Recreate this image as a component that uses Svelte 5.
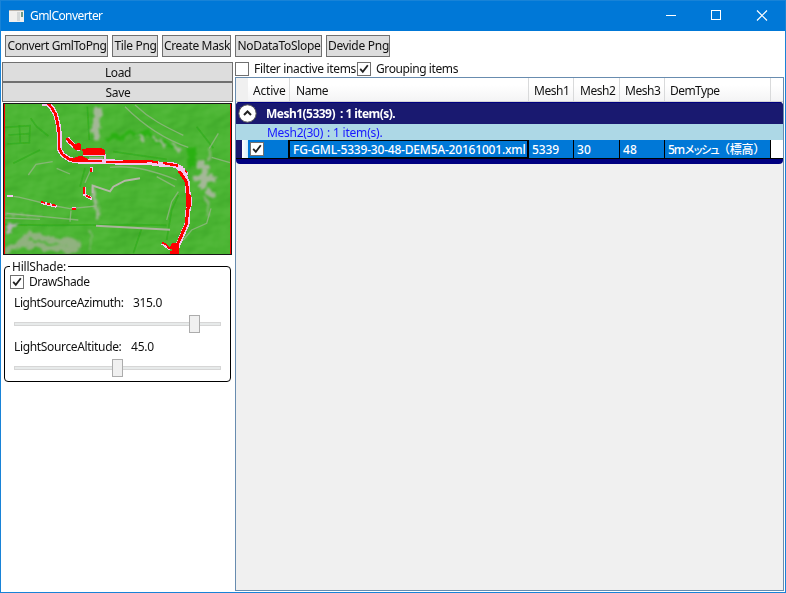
<script>
  // Spread or tighten a label so it takes exactly the given width.
  function fit(node, width) {
    const natural = node.getBoundingClientRect().width;
    const count = [...node.textContent].length;
    node.style.letterSpacing = `${(width - natural) / count}px`;
  }

  const tools = [
    { label: 'Convert GmlToPng', box: 103, text: 99 },
    { label: 'Tile Png', box: 46, text: 42 },
    { label: 'Create Mask', box: 69, text: 66 },
    { label: 'NoDataToSlope', box: 87, text: 83 },
    { label: 'Devide Png', box: 64, text: 61 }
  ];
  const columns = [
    { label: 'Active', box: 42, text: 32.5, pad: 5 },
    { label: 'Name', box: 239, text: 32, pad: 6 },
    { label: 'Mesh1', box: 45, text: 35.5, pad: 5 },
    { label: 'Mesh2', box: 46, text: 35.5, pad: 6 },
    { label: 'Mesh3', box: 45, text: 35.5, pad: 5 },
    { label: 'DemType', box: 106, text: 49.5, pad: 5 }
  ];
  const cells = [
    { label: '5339', box: 45, text: 27 },
    { label: '30', box: 46, text: 14 },
    { label: '48', box: 45, text: 14 }
  ];
  const sliders = [
    { label: 'LightSourceAzimuth:', text: 109.5, value: '315.0', valueText: 29, left: 175 },
    { label: 'LightSourceAltitude:', text: 107.5, value: '45.0', valueText: 23, left: 98 }
  ];
  const river = 'M143 10L156 24L166 42L173 70L177 100L177 145L187 163L208 176L230 181L310 183L375 185L440 185L475 190L520 193L535 199L549 217L560 242L563 275L569 302L562 335L560 370L547 400L533 432L523 461';
  const faint = [
    'M85 225L108 193L158 185', 'M170 205L210 222', 'M255 248L271 212',
    'M330 202C390 195 450 207 530 240', 'M375 20C435 80 500 120 565 142',
    'M405 15C450 58 495 80 550 106', 'M40 289C80 294 115 306 150 315L210 326L290 318',
    'M20 340L130 350L235 360', 'M15 354L120 358', 'M210 365L213 332',
    'M635 172L690 188', 'M628 145L655 100', 'M550 420L575 390L620 370L633 325',
    'M500 360L515 305L535 275', 'M470 230L525 260'
  ];
  const creases = [
    'M15 82L90 77L88 128L22 132', 'M25 105L88 101', 'M58 75L61 128', 'M92 55L110 80L145 108',
    'M15 374L150 376L400 374L500 376', 'M340 155L500 178', 'M535 285L515 330L500 420',
    'M590 80L640 145', 'M262 20L268 120', 'M425 385L400 460', 'M255 205L240 260', 'M120 150L40 190'
  ];
</script>

{#snippet check()}
  <svg class="tick" viewBox="0 0 12 12"><path d="M2.2 5.8L4.8 8.8L9.8 2.2" fill="none" stroke="#212121" stroke-width="1.8" /></svg>
{/snippet}

<div class="window">
  <header>
    <svg class="logo" width="15" height="12" viewBox="0 0 15 12">
      <defs><linearGradient id="app" x2="0" y2="1"><stop stop-color="#3d6680" /><stop offset="1" stop-color="#4f9a68" /></linearGradient></defs>
      <rect width="15" height="12" fill="#f0f0ee" /><rect width="15" height="1" fill="#b9b4ac" />
      <rect x="1" y="2" width="6" height="9" fill="url(#app)" />
      <rect x="8" y="2" width="3" height="9" fill="#d4d8d8" /><rect x="12" y="2" width="2" height="5" fill="#6f9a86" />
    </svg>
    <span class="title" use:fit={72.5}>GmlConverter</span>
    <svg class="controls" width="110" height="30" viewBox="0 0 110 30" fill="none" stroke="#fff">
      <path d="M0 14.5H10" /><rect x="45.5" y="9.5" width="9" height="9" /><path d="M91 9.5L101 19.5M101 9.5L91 19.5" stroke-width="1.2" />
    </svg>
  </header>

  <nav>
    {#each tools as t}
      <button style:width="{t.box}px"><span use:fit={t.text}>{t.label}</span></button>
    {/each}
  </nav>

  <main>
    <aside>
      <button class="wide"><span use:fit={26}>Load</span></button>
      <button class="wide"><span use:fit={25}>Save</span></button>

      <svg class="map" width="229" height="152" viewBox="9 9 687 456" preserveAspectRatio="none">
        <defs>
          <filter id="soft" filterUnits="userSpaceOnUse" x="0" y="0" width="700" height="470"><feGaussianBlur stdDeviation="2.2" /></filter>
          <filter id="smudge" filterUnits="userSpaceOnUse" x="0" y="0" width="700" height="470" color-interpolation-filters="sRGB">
            <feTurbulence type="fractalNoise" baseFrequency="0.04" numOctaves="3" seed="4" result="n" />
            <feDisplacementMap in="SourceGraphic" in2="n" scale="26" xChannelSelector="R" yChannelSelector="G" result="d" /><feGaussianBlur in="d" stdDeviation="2.6" />
          </filter>
          <filter id="relief" x="0" y="0" width="100%" height="100%" color-interpolation-filters="sRGB">
            <feTurbulence type="fractalNoise" baseFrequency="0.01 0.015" numOctaves="3" seed="9" />
            <feDiffuseLighting surfaceScale="14" lighting-color="#fff"><feDistantLight azimuth="225" elevation="30" /></feDiffuseLighting>
          </filter>
        </defs>
        <rect x="9" y="9" width="687" height="456" fill="#4bb533" />
        <rect x="9" y="9" width="687" height="456" filter="url(#relief)" class="shade" />
        <g filter="url(#smudge)" fill="none" stroke="#20b008" stroke-opacity=".75">
          <path d="M318 122L345 105L370 115L390 95L415 108L440 95L470 125L500 130L520 145" stroke-width="14" />
          <path d="M575 140L575 200" stroke-width="20" />
        </g>
        <g filter="url(#soft)" fill="none" stroke="#26a810" stroke-opacity=".5" stroke-width="5">
          {#each creases as d}<path {d} />{/each}
        </g>
        <g filter="url(#smudge)" fill="none" stroke="#a9b79d" stroke-opacity=".95">
          <path d="M295 22L291 65L285 115" stroke-width="20" />
          <path d="M415 105L430 125M455 108L475 125M480 120L500 142M515 128L540 155" stroke-width="9" />
          <path d="M578 232L650 238M604 180L612 220L607 265M620 275L640 281M590 195L630 200" stroke-width="17" />
          <path d="M20 382L50 374M18 398L34 390" stroke-width="14" stroke="#bcb4bc" />
          <path d="M15 450L65 432L105 435L160 445L235 448M65 425L90 405L190 425L240 432" stroke-width="20" stroke="#93b183" />
          <path d="M278 260L283 295L295 330L292 360" stroke-width="9" />
          <path d="M274 390L268 450M15 342L125 348" stroke-width="6" stroke-opacity=".6" />
          <path d="M620 290L622 350M625 150L627 180" stroke-width="9" stroke-opacity=".7" />
        </g>
        <g filter="url(#soft)" fill="none" stroke="#98b58a" stroke-width="4" stroke-opacity=".75">
          {#each faint as d}<path {d} />{/each}
          <path d="M278 280L278 257L330 274L340 260L375 242L420 235" stroke="#b4b7a7" stroke-width="6" stroke-opacity="1" />
          <path d="M288 377L510 389" stroke="#aab49c" stroke-width="6" stroke-opacity="1" />
        </g>
        <g shape-rendering="crispEdges">
          <g fill="none" stroke="#f5c4f0" stroke-linejoin="bevel">
            <path d={river} stroke-width="15" transform="translate(1 2)" />
            <path d="M201 115L217 134L241 148" stroke-width="15" />
            <path d="M248 166H316V182" stroke-width="6" />
            <path d="M486 429L510 448M275 202V217M253 260V284L276 297M125 308L170 319M216 326H228M551 205V214L563 223" stroke-width="9" />
            <path d="M22 288H38M126 14H145" stroke-width="6" />
          </g>
          <path d="M266 174H308" stroke="#8fb37f" stroke-width="7" />
          <g fill="none" stroke="#fe0000" stroke-linejoin="bevel">
            <path d="M143 10L156 24L166 42L173 70L177 100L177 145L187 163L208 178L230 181L265 182" stroke-width="8" />
            <path d="M265 183H307M318 186H372L440 185" stroke-width="6" /><path d="M370 183H450L475 188M488 189L535 197" stroke-width="7" />
            <path d="M537 213L550 231L560 248L563 280L569 302L562 335L560 370L547 400L533 432" stroke-width="9" />
            <path d="M566 285V320" stroke-width="14" /><path d="M200 115L212 128L225 139" stroke-width="9" />
            <path d="M273 203V216M252 262V283M258 287L273 293M123 306L136 309M141 311L150 313M156 314L169 317M216 327H227M486 428L498 434L510 447M555 211L561 218" stroke-width="5" />
          </g>
          <path d="M226 133L234 129L244 132V151H228L219 143ZM246 147L263 145H304L316 150V165H250ZM215 176L230 171L238 168L248 169L262 175L267 185H216ZM511 438L516 430H536V462H510V453H515V446H511Z" fill="#fe0000" />
          <path d="M475 190H485M537 203H550" stroke="#f5c4f0" stroke-width="8" />
          <path d="M13.5 9V465M691.5 9V465" stroke="#fe0000" stroke-width="3" />
          <rect x="10.5" y="10.5" width="684" height="453" fill="none" stroke="#171717" stroke-width="3" />
        </g>
      </svg>

      <section class="group">
        <span class="legend"><span use:fit={54}>HillShade:</span></span>
        <label class="draw"><i class="box">{@render check()}</i><span use:fit={60.5}>DrawShade</span></label>
        {#each sliders as s}
          <div class="slider">
            <div class="caption"><span use:fit={s.text}>{s.label}</span><span use:fit={s.valueText}>{s.value}</span></div>
            <div class="track"><div class="thumb" style:left="{s.left}px"></div></div>
          </div>
        {/each}
      </section>
    </aside>

    <article>
      <div class="filters">
        <i class="box"></i><span class="filter first" use:fit={102}>Filter inactive items</span>
        <i class="box">{@render check()}</i><span class="filter" use:fit={82}>Grouping items</span>
      </div>
      <div class="grid">
        <div class="head">
          <div class="corner"></div>
          {#each columns as c}
            <div class="col" style:width="{c.box}px" style:padding-left="{c.pad}px"><span use:fit={c.text}>{c.label}</span></div>
          {/each}
        </div>
        <div class="outer">
          <div class="mesh1">
            <svg width="19" height="19" viewBox="0 0 19 19"><circle cx="9.5" cy="9.5" r="8.7" fill="#fff" stroke="#555" /><path d="M6 11L9.5 7.5L13 11" fill="none" stroke="#222" stroke-width="2" /></svg>
            <span class="name" use:fit={69}>Mesh1(5339)</span><span use:fit={55}>: 1 item(s).</span>
          </div>
          <div class="mesh2"><span class="name" use:fit={56}>Mesh2(30)</span><span use:fit={55.5}>: 1 item(s).</span></div>
          <div class="row">
            <div class="rowhead"></div>
            <div class="cell active"><i class="box">{@render check()}</i></div>
            <div class="cell file"><span use:fit={232.5}>FG-GML-5339-30-48-DEM5A-20161001.xml</span></div>
            {#each cells as c}
              <div class="cell" style:width="{c.box}px"><span use:fit={c.text}>{c.label}</span></div>
            {/each}
            <div class="cell dem"><span use:fit={16}>5m</span><span class="kana" use:fit={34}>メッシュ</span><span use:fit={47}>（標高）</span></div>
            <div class="rest"></div>
          </div>
        </div>
      </div>
    </article>
  </main>
</div>

<style>
  :global(body) { background: #fff; overflow: hidden; }
  * { box-sizing: border-box; }
  .window {
    width: 786px; height: 593px; display: flex; flex-direction: column;
    border: 1px solid #1883d7; background: #fff; color: #111;
    font: 12px/16px "Noto Sans", "Open Sans", "Noto Sans CJK JP", sans-serif;
  }
  span { white-space: pre; flex: none; }
  header { height: 30px; flex: none; background: #0078d7; color: #fff; display: flex; align-items: center; padding-left: 8px; }
  .title { margin-left: 6px; }
  .logo { flex: none; }
  .controls { margin-left: auto; margin-right: 9px; }
  nav { display: flex; gap: 4px; padding: 4px 0 0 4px; height: 31px; flex: none; }
  button {
    font: inherit; color: #111; background: #ddd; border: 1px solid #707070; border-radius: 0;
    padding: 0 0 0 1px; height: 22px; display: flex; align-items: center; justify-content: center; flex: none;
  }
  main { display: flex; flex: 1; min-height: 0; }
  aside { width: 233px; padding-left: 1px; flex: none; }
  .wide { width: 231px; height: 20px; padding-top: 2px; }
  .map { display: block; margin: 1px 0 0 1px; }
  .shade { mix-blend-mode: soft-light; opacity: .2; }
  .group { border: 1px solid #000; border-radius: 4px; width: 227px; height: 116px; margin: 11px 0 0 2px; padding-left: 5px; }
  .legend { display: flex; width: 58px; height: 16px; margin: -8px 0 0 0; padding-left: 2px; background: #fff; }
  .box { width: 14px; height: 14px; border: 1px solid #707070; background: #fff; display: block; flex: none; }
  .tick { display: block; width: 12px; height: 12px; }
  .draw { display: flex; align-items: center; height: 14px; gap: 5px; }
  .slider { height: 44px; padding: 6px 0 0 4px; }
  .caption { display: flex; gap: 9.5px; }
  .track { width: 207px; height: 4px; border: 1px solid #d6d6d6; background: #e7eaea; margin-top: 11px; position: relative; }
  .thumb { position: absolute; top: -8px; width: 11px; height: 18px; background: #f0f0f0; border: 1px solid #acacac; margin-left: -1px; }
  article { flex: 1; display: flex; flex-direction: column; min-width: 0; padding: 0 1px 1px 1px; }
  .filters { display: flex; align-items: center; height: 15px; padding-bottom: 1px; }
  .filter { margin-left: 5px; }
  .first { margin-right: 1px; }
  .grid { flex: 1; border: 1px solid #688caf; background: #f0f0f0; }
  .head { height: 24px; display: flex; background: linear-gradient(#fff 30%, #f4f4f5); border-bottom: 1px solid #d5d5d5; }
  .corner { width: 12px; background: #f0f0f0; }
  .col { border-right: 1px solid #d9dadb; display: flex; align-items: center; padding-top: 2px; flex: none; }
  .outer { background: #000080; border-radius: 4px; height: 62px; overflow: hidden; }
  .mesh1 { height: 22px; background: #191970; border-top: 1px solid #000080; color: #fff; font-weight: 700; display: flex; align-items: center; padding-left: 2px; }
  .mesh1 .name { margin: 0 5px 0 9px; }
  .mesh2 { height: 16px; background: #add8e6; color: #1717ff; display: flex; align-items: center; padding: 2px 0 0 31px; }
  .mesh2 .name { margin-right: 4px; }
  .row { height: 19px; display: flex; color: #fff; border-bottom: 1px solid #000; background: #191970; padding-left: 6px; font-weight: 500; }
  .rowhead { width: 6px; background: linear-gradient(90deg, #fff, #d4edfa); }
  .cell { height: 18px; background: #0078d7; border-right: 1px solid #000; display: flex; align-items: center; padding-left: 3px; padding-top: 1px; flex: none; }
  .active { width: 41px; padding: 0 0 0 2px; }
  .file { width: 240px; border: 1px solid #000; border-width: 1px 2px 1px 1px; }
  .dem { width: 106px; }
  .kana { font-size: 11px; }
  .rest { background: #fff; flex: 1; }
</style>
